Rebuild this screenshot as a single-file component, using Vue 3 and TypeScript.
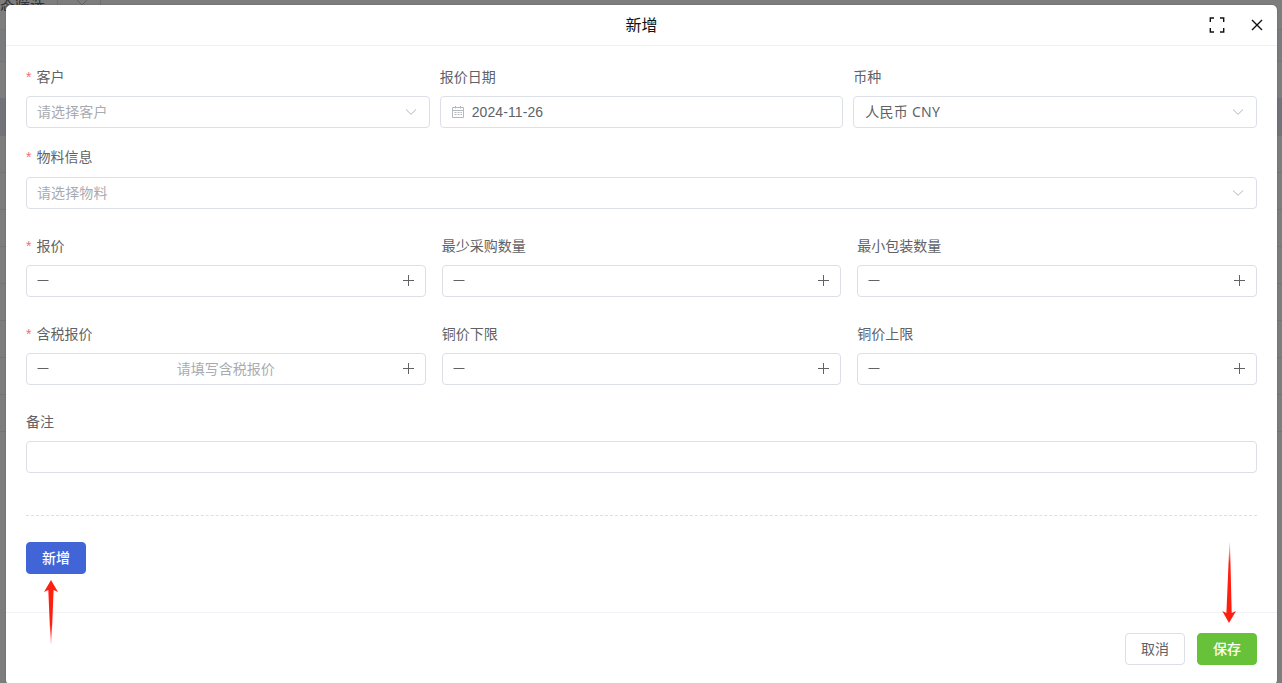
<script setup lang="ts">
interface Field {
  label: string
  required?: boolean
  kind: 'select' | 'date' | 'number' | 'text'
  value?: string
  placeholder?: string
}

const rows: { name: string; fields: Field[] }[] = [
  {
    name: 'basic',
    fields: [
      { label: '客户', required: true, kind: 'select', placeholder: '请选择客户' },
      { label: '报价日期', kind: 'date', value: '2024-11-26' },
      { label: '币种', kind: 'select', value: '人民币 CNY' },
    ],
  },
  {
    name: 'material',
    fields: [{ label: '物料信息', required: true, kind: 'select', placeholder: '请选择物料' }],
  },
  {
    name: 'numbers',
    fields: [
      { label: '报价', required: true, kind: 'number' },
      { label: '最少采购数量', kind: 'number' },
      { label: '最小包装数量', kind: 'number' },
    ],
  },
  {
    name: 'numbers',
    fields: [
      { label: '含税报价', required: true, kind: 'number', placeholder: '请填写含税报价' },
      { label: '铜价下限', kind: 'number' },
      { label: '铜价上限', kind: 'number' },
    ],
  },
  { name: 'remark', fields: [{ label: '备注', kind: 'text' }] },
]
</script>

<template>
  <div class="page">
    <div class="backdrop">
      <div class="bar">
        <span class="bar-text">态筛选</span>
        <span class="bar-cell">
          <svg width="12" height="8" viewBox="0 0 12 8"><path d="M1 0l5 5 5-5" /></svg>
        </span>
      </div>
      <div class="band head"></div>
      <div class="band plain"></div>
      <div class="band selected"></div>
      <div v-for="n in 8" :key="n" class="line"></div>
    </div>

    <section class="dialog">
      <header class="header">
        <span class="title">新增</span>
        <div class="tools">
          <svg width="16" height="16" viewBox="0 0 16 16" class="full">
            <path d="M1.3 5V1H5M11 1H14.7V5M14.7 11V15H11M5 15H1.3V11" />
          </svg>
          <svg width="12" height="12" viewBox="0 0 12 12" class="close">
            <path d="M1 1L11 11M11 1L1 11" />
          </svg>
        </div>
      </header>

      <main class="body">
        <div v-for="(row, i) in rows" :key="i" class="row" :class="row.name">
          <div v-for="field in row.fields" :key="field.label" class="field">
            <label class="label"><i v-if="field.required" class="star">*</i>{{ field.label }}</label>
            <div class="control" :class="field.kind">
              <svg v-if="field.kind === 'date'" class="calendar" width="12" height="12" viewBox="0 0 12 12">
                <path d="M.5 1.5H11.5V11.5H.5ZM.5 4.5H11.5M3.5 0V2.5M8.5 0V2.5" />
                <path class="dots" d="M2.5 6.5H10M2.5 8.5H10" />
              </svg>
              <svg v-if="field.kind === 'number'" class="sign" width="12" height="13" viewBox="0 0 12 13">
                <path d="M.5 6.5H11.5" />
              </svg>
              <span class="value" :class="{ placeholder: !field.value }">{{ field.value ?? field.placeholder }}</span>
              <svg v-if="field.kind === 'number'" class="sign" width="12" height="13" viewBox="0 0 12 13">
                <path d="M0 6.5H11M5.5 1V12" />
              </svg>
              <svg v-if="field.kind === 'select'" class="arrow" width="12" height="8" viewBox="0 0 12 8">
                <path d="M1 1.5L6 6.3L11 1.5" />
              </svg>
            </div>
          </div>
        </div>
        <div class="divider"></div>
        <button class="btn primary">新增</button>
      </main>

      <footer class="footer">
        <button class="btn">取消</button>
        <button class="btn success">保存</button>
      </footer>
    </section>

    <svg class="pointer up" width="16" height="66" viewBox="0 0 16 66">
      <defs>
        <linearGradient id="fadeUp" x1="0" y1="0" x2="0" y2="1">
          <stop offset="0.7" stop-color="#ff1f10" />
          <stop offset="1" stop-color="#ff1f10" stop-opacity="0.15" />
        </linearGradient>
      </defs>
      <path d="M8 0L15 12L10.6 10L8.4 64H7.6L5.3 10L1 12Z" fill="url(#fadeUp)" />
    </svg>
    <svg class="pointer down" width="16" height="82" viewBox="0 0 16 82">
      <defs>
        <linearGradient id="fadeDown" x1="0" y1="0" x2="0" y2="1">
          <stop offset="0" stop-color="#ff1f10" stop-opacity="0.15" />
          <stop offset="0.25" stop-color="#ff1f10" />
        </linearGradient>
      </defs>
      <path d="M8.4 1H9L10.7 71L15 69L8 81L1.3 69L5.4 71Z" fill="url(#fadeDown)" />
    </svg>
  </div>
</template>

<style>
body {
  margin: 0;
  overflow: hidden;
}
</style>

<style scoped>
.page {
  position: relative;
  box-sizing: border-box;
  width: 1282px;
  height: 683px;
  padding: 5px 5px 0 6px;
  overflow: hidden;
  background: #7d7d7d;
  color: #606266;
  font: 14px/22px "Liberation Sans", "Noto Sans CJK SC", sans-serif;
}
.backdrop {
  position: absolute;
  inset: 0;
}
.bar {
  display: flex;
  height: 30px;
  border-bottom: 1px solid #75767a;
  box-sizing: border-box;
}
.bar-text {
  width: 57px;
  margin-top: -6px;
  color: #303133;
  font-size: 15px;
  white-space: nowrap;
}
.bar-cell {
  width: 42px;
  height: 8px;
  border: solid #6e7074;
  border-width: 0 1px;
}
.bar-cell svg {
  display: block;
  margin-left: 18px;
}
.bar path {
  fill: none;
  stroke: #606266;
}
.band {
  box-sizing: border-box;
}
.head {
  height: 32px;
  background: #797b7e;
  border-bottom: 1px solid #757679;
}
.plain {
  height: 36px;
}
.selected {
  height: 38px;
  background: #727379;
}
.line {
  height: 37px;
  box-sizing: border-box;
  border-bottom: 1px solid #737478;
}
.dialog {
  position: relative;
  display: flex;
  flex-direction: column;
  height: 680px;
  border-radius: 5px;
  background: #fff;
  box-shadow: 0 0 2px rgba(0, 0, 0, 0.2);
}
.header {
  display: flex;
  align-items: center;
  height: 40px;
  padding: 0 14px 0 20px;
  border-bottom: 1px solid #f0f0f2;
}
.title {
  flex: 1;
  padding: 2px 0 0 88px;
  margin-right: 40px;
  color: #111;
  font-size: 16px;
  text-align: center;
}
.tools {
  display: flex;
  align-items: center;
  gap: 26px;
}
.tools path {
  fill: none;
  stroke: #111;
  stroke-width: 1.4;
}
.body {
  flex: 1;
  padding: 20px 20px 0;
}
.row {
  display: grid;
  grid-template-columns: repeat(3, 1fr);
  gap: 16px;
  margin-bottom: 26px;
}
.basic {
  gap: 10px;
  margin-bottom: 18px;
}
.material,
.remark {
  grid-template-columns: 1fr;
}
.remark {
  margin-bottom: 42px;
}
.label {
  display: block;
  height: 22px;
  margin-bottom: 8px;
}
.material .label {
  margin-bottom: 9px;
}
.star {
  margin-right: 5px;
  color: #f56c6c;
  font-style: normal;
}
.control {
  display: flex;
  align-items: center;
  box-sizing: border-box;
  height: 32px;
  padding: 0 12px 0 11px;
  border: 1px solid #dcdfe6;
  border-radius: 4px;
}
.control path {
  fill: none;
  stroke: #b4b7bd;
}
.value {
  flex: 1;
}
.date .value {
  letter-spacing: 0.1px;
}
.select .value {
  font-family: "Noto Sans", "Noto Sans CJK SC", sans-serif;
  letter-spacing: 0.25px;
}
.select .placeholder {
  margin-left: -1px;
  letter-spacing: 0.1px;
}
.placeholder {
  color: #a8abb2;
}
.calendar {
  margin-right: 8px;
}
.calendar .dots {
  stroke-dasharray: 2 1;
}
.number {
  padding: 0 10px 1px;
}
.number .value {
  padding-top: 1px;
  text-align: center;
}
.control .sign path {
  stroke: #606266;
}
.divider {
  margin-bottom: 26px;
  border-top: 1px dashed #dcdfe6;
}
.btn {
  display: block;
  box-sizing: border-box;
  width: 60px;
  height: 32px;
  padding: 0;
  border: 1px solid #dcdfe6;
  border-radius: 4px;
  background: #fff;
  color: #606266;
  font: inherit;
}
.primary {
  border-color: #4165d7;
  background: #4165d7;
  color: #fff;
  font-weight: 500;
}
.success {
  border-color: #67c23a;
  background: #67c23a;
  color: #fff;
  font-weight: 500;
}
.footer {
  display: flex;
  justify-content: flex-end;
  gap: 12px;
  height: 52px;
  padding: 20px 20px 0;
  border-top: 1px solid #f0f2f8;
}
.pointer {
  position: absolute;
}
.up {
  left: 43px;
  top: 580px;
}
.down {
  left: 1221px;
  top: 542px;
}
</style>
